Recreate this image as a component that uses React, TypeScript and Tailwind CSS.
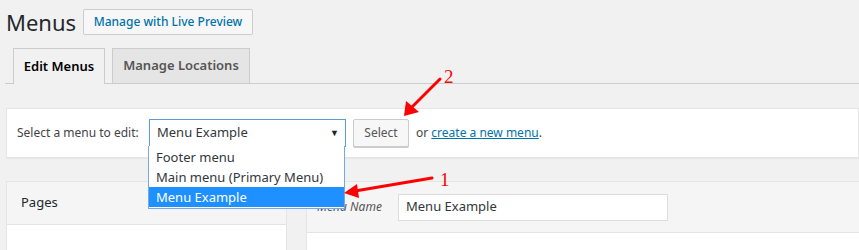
import React from 'react';

const font = { fontFamily: '"Noto Sans", "Open Sans", sans-serif' };

function Arrows() {
  return (
    <svg className="pointer-events-none absolute left-0 top-0" width={859} height={250}>
      <line x1={440} y1={79} x2={411} y2={108} stroke="#f00" strokeWidth={3} strokeLinecap="round" />
      <polygon points="404,116 406,101 419,112" fill="#f00" />
      <line x1={432} y1={178} x2={355} y2={191} stroke="#f00" strokeWidth={3} strokeLinecap="round" />
      <polygon points="344,193 357,184 359,198" fill="#f00" />
      <text x={444} y={83} fill="#f00" fontSize={19} fontFamily='"Liberation Serif", serif'>2</text>
      <text x={440} y={186} fill="#f00" fontSize={19} fontFamily='"Liberation Serif", serif'>1</text>
    </svg>
  );
}

export default function App() {
  return (
    <div className="relative h-[250px] w-[859px] overflow-hidden bg-[#f1f1f1] pl-[6px] text-[#23282d]" style={font}>
      <div className="mt-[9px] flex h-[26px] items-center">
        <h1 className="w-[77px] text-[22px] leading-none font-normal text-[#23282d]">Menus</h1>
        <button
          type="button"
          className="flex h-[26px] w-[170px] items-center justify-center rounded-[2px] border border-[#ccc] bg-[#f7f7f7] text-[12px] font-medium text-[#0073aa]"
        >
          Manage with Live Preview
        </button>
      </div>

      <div className="mt-[13px] -ml-[1px] flex h-[36px] items-end border-b border-[#ccc] pl-[8px]">
        <div className="-mb-px flex h-[36px] w-[92px] items-center justify-center border border-b-0 border-[#ccc] bg-[#f1f1f1] text-[13px] font-semibold text-black">
          Edit Menus
        </div>
        <div className="ml-[7px] flex h-[35px] w-[138px] items-center justify-center border border-b-0 border-[#ccc] bg-[#e5e5e5] text-[13px] font-semibold text-[#555]">
          Manage Locations
        </div>
      </div>

      <div className="mt-[24px] flex items-center border border-[#e5e5e5] bg-white py-[10px] pl-[10px] shadow-[0_1px_1px_rgba(0,0,0,0.04)]">
        <span className="w-[132px] text-[12px] text-[#444]">Select a menu to edit:</span>
        <div className="flex h-[28px] w-[197px] items-center justify-between border border-[#5b9dd9] bg-white pl-[7px] pr-[6px] text-[13px] text-[#32373c]">
          <span>Menu Example</span>
          <span className="text-[9px] text-[#222]">▼</span>
        </div>
        <button
          type="button"
          className="ml-[7px] flex h-[28px] w-[56px] items-center justify-center rounded-[2px] border border-[#ccc] bg-[#f7f7f7] text-[12px] text-[#555] shadow-[0_1px_0_#ccc]"
        >
          Select
        </button>
        <span className="ml-[7px] text-[12px] text-[#444]">
          or{' '}
          <a href="#" className="text-[#0073aa] underline">
            create a new menu
          </a>
          .
        </span>
      </div>

      <div className="mt-[23px] flex h-[80px] items-start gap-[19px]">
        <div className="flex h-[80px] w-[281px] flex-col border border-[#e5e5e5] bg-white">
          <div className="flex h-[43px] items-center border-b border-[#e5e5e5] bg-[#f5f5f5] pl-[14px] text-[13px] text-[#23282d]">
            Pages
          </div>
        </div>
        <div className="flex h-[80px] flex-1 flex-col border border-r-0 border-[#e5e5e5] bg-white">
          <div className="flex h-[51px] items-center border-b border-[#e5e5e5] bg-[#f5f5f5] pl-[10px]">
            <span className="w-[81px] text-[12px] italic text-[#555]">Menu Name</span>
            <div className="flex h-[27px] w-[270px] items-center border border-[#ddd] bg-white pl-[7px] text-[13px] text-[#32373c]">
              Menu Example
            </div>
          </div>
        </div>
      </div>

      <div className="absolute left-[148px] top-[146px] w-[197px] border border-t-0 border-[#7aa7e0] bg-white py-[1px] text-[13px] leading-[20px] text-[#32373c]">
        <div className="pl-[7px]">Footer menu</div>
        <div className="pl-[7px]">Main menu (Primary Menu)</div>
        <div className="bg-[#1e90ff] pl-[7px] text-white">Menu Example</div>
      </div>

      <Arrows />
    </div>
  );
}
